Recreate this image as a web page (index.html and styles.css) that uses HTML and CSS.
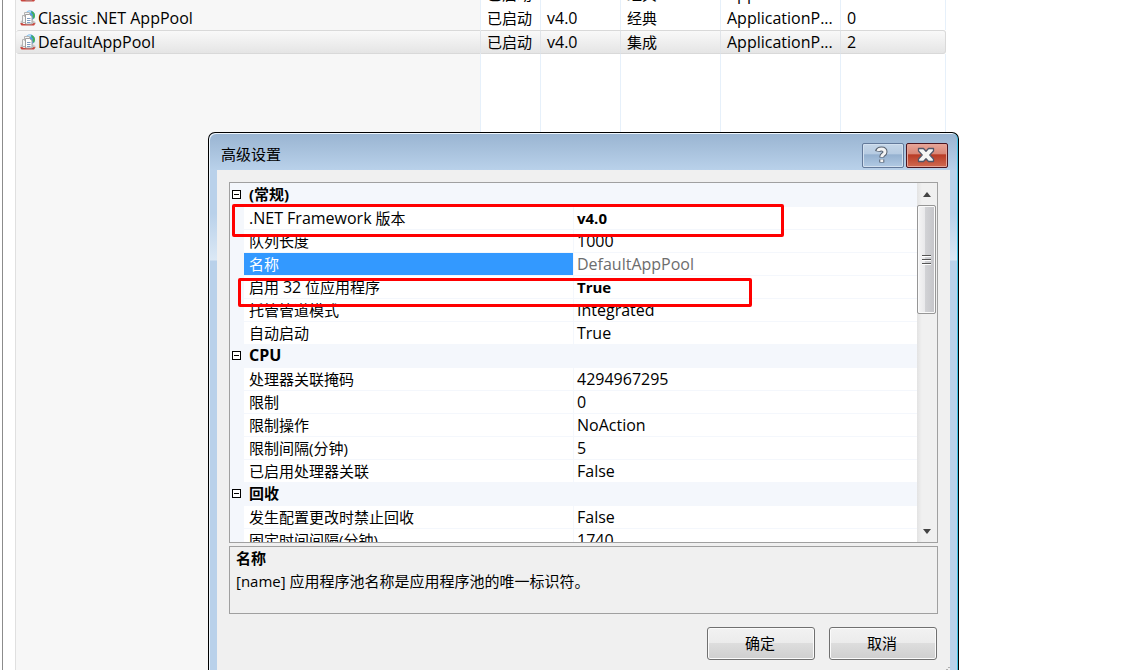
FILE: index.html
```html
<!DOCTYPE html>
<html lang="zh-CN">
<head>
<meta charset="utf-8">
<title>高级设置</title>
<link rel="stylesheet" href="styles.css">
</head>
<body>
<svg class="defs" aria-hidden="true">
  <symbol id="pool" viewBox="0 0 16 16">
    <circle cx="10" cy="5.5" r="5" fill="#4a9be4"/>
    <path d="M6 2.500Q8 .5 11 .8L10.500 3 8.500 4.500 6 4Z" fill="#b5e2fa"/>
    <path d="M11.500 1Q15 2.500 15 6L14 9 12.500 7 13 4.500 11.500 3Z" fill="#45b054"/>
    <path d="M.5 11.500 3 9.500v4l-2 1zM12 10l3.500 2v2l-3-.5z" fill="#c6c6c6"/>
    <path d="M0 13.500Q2 12.500 3.500 14h9q1-1.500 3-.5L14 15.500H1.500Z" fill="#c9473f"/>
    <path d="M2.500 5.500h5v7h-5zM4.500 2.500h5v4h-5z" fill="#f5f5f5" stroke="#b4b4b4"/>
    <path d="M5.500 4.500h4l2.500 2v7.500H5.500z" fill="#fff" stroke="#a0a0a0"/>
    <path d="M7 8.500h3.500M7 10.500h3.500M7 12.500h3.500" stroke="#7f9cc0"/>
  </symbol>
</svg>
<main class="list">
  <table class="pools">
    <colgroup><col><col class="c-state"><col class="c-ver"><col class="c-mode"><col class="c-id"><col class="c-apps"></colgroup>
    <tbody>
      <tr><td><span class="name"><svg class="ico"><use href="#pool"/></svg>ASP.NET v4.0</span></td><td>已启动</td><td>v4.0</td><td>经典</td><td>ApplicationP...</td><td>0</td></tr>
      <tr><td><span class="name"><svg class="ico"><use href="#pool"/></svg>Classic .NET AppPool</span></td><td>已启动</td><td>v4.0</td><td>经典</td><td>ApplicationP...</td><td>0</td></tr>
      <tr class="chosen"><td><span class="name"><svg class="ico"><use href="#pool"/></svg>DefaultAppPool</span></td><td>已启动</td><td>v4.0</td><td>集成</td><td>ApplicationP...</td><td>2</td></tr>
      <tr class="rest"><td></td><td></td><td></td><td></td><td></td><td></td></tr>
    </tbody>
  </table>
</main>

<section class="dialog" role="dialog" aria-labelledby="dlg-title">
  <header class="caption">
    <h1 id="dlg-title">高级设置</h1>
    <button class="cap help" type="button" aria-label="帮助">
      <svg width="14" height="18" viewBox="1 0 14 18" fill="none"><path d="M3.500 5.500Q4 3 7.500 3 11 3 11 6q0 1.500-2 2.700-1.200.8-1.200 2.800M7.800 13.500v3" stroke="#56606f" stroke-width="5"/><path d="M4 5Q4.500 3 7.500 3 11 3 11 6q0 1.500-2 2.700-1.200.8-1.200 2.300M7.800 13.500v2.500" stroke="#f4f4f4" stroke-width="3"/></svg>
    </button>
    <button class="cap close" type="button" aria-label="关闭">
      <svg width="18" height="16" viewBox="0 0 18 16"><path d="M1.500 1.500h5L9 4.200l2.500-2.700h5v2.500L12.800 8l3.700 4v2.500h-5L9 11.800l-2.500 2.700h-5V12l3.700-4-3.700-4z" fill="#f5f5f5" stroke="#525668" stroke-width="1.300" stroke-linejoin="round"/></svg>
    </button>
  </header>
  <div class="content">
    <div class="grid">
      <div class="view">
        <table class="props">
          <colgroup><col class="p-gutter"><col class="p-name"><col></colgroup>
          <tbody>
            <tr class="cat"><td><button class="fold" type="button" aria-label="折叠 常规"></button></td><th colspan="2">(常规)</th></tr>
            <tr><td></td><td><span class="latin">.NET Framework</span> 版本</td><td><b>v4.0</b></td></tr>
            <tr><td></td><td>队列长度</td><td>1000</td></tr>
            <tr class="picked"><td></td><td>名称</td><td>DefaultAppPool</td></tr>
            <tr><td></td><td>启用 <span class="latin">32</span> 位应用程序</td><td><b>True</b></td></tr>
            <tr><td></td><td>托管管道模式</td><td>Integrated</td></tr>
            <tr><td></td><td>自动启动</td><td>True</td></tr>
            <tr class="cat"><td><button class="fold" type="button" aria-label="折叠 CPU"></button></td><th colspan="2"><span class="latin">CPU</span></th></tr>
            <tr><td></td><td>处理器关联掩码</td><td>4294967295</td></tr>
            <tr><td></td><td>限制</td><td>0</td></tr>
            <tr><td></td><td>限制操作</td><td>NoAction</td></tr>
            <tr><td></td><td>限制间隔(分钟)</td><td>5</td></tr>
            <tr><td></td><td>已启用处理器关联</td><td>False</td></tr>
            <tr class="cat"><td><button class="fold" type="button" aria-label="折叠 回收"></button></td><th colspan="2">回收</th></tr>
            <tr><td></td><td>发生配置更改时禁止回收</td><td>False</td></tr>
            <tr><td></td><td>固定时间间隔(分钟)</td><td>1740</td></tr>
          </tbody>
        </table>
      </div>
      <div class="bar">
        <button class="arrow" type="button" aria-label="向上滚动"><svg width="8" height="5"><path d="M0 5 4 0l4 5z" fill="#444"/></svg></button>
        <div class="thumb"><i></i><i></i><i></i></div>
        <button class="arrow down" type="button" aria-label="向下滚动"><svg width="8" height="5"><path d="M0 0h8L4 5z" fill="#444"/></svg></button>
      </div>
    </div>
    <div class="about"><b>名称</b><p>[name] 应用程序池名称是应用程序池的唯一标识符。</p></div>
    <footer class="actions"><button class="push" type="button">确定</button><button class="push" type="button">取消</button></footer>
    <svg class="grip" width="4" height="3" aria-hidden="true"><path d="M2 0h2v1H2zM0 2h2v1H0z" fill="#b0b0b0"/></svg>
  </div>
  <div class="mark mark-version"></div>
  <div class="mark mark-bits"></div>
</section>
</body>
</html>
```
FILE: styles.css
```css
* { box-sizing: border-box; }
body {
  margin: 0;
  height: 100vh;
  overflow: hidden;
  background: #fff;
  color: #000;
  font: 15px/22px "Open Sans", "Noto Sans CJK SC", sans-serif;
}
button { font: inherit; color: inherit; padding: 0; }
table { border-collapse: separate; border-spacing: 0; table-layout: fixed; }
td, th { padding: 0; text-align: left; white-space: nowrap; overflow: hidden; }
.defs { display: none; }

/* application pool list */
.list {
  height: 100vh;
  margin-left: 2px;
  padding-left: 12px;
  border-left: 1px solid #8c8c8c;
  overflow: hidden;
}
.pools {
  width: 931px;
  height: calc(100vh + 18px);
  margin-top: -18px;
  border-left: 1px solid #e0e0e0;
}
.c-state { width: 60px; }
.c-ver { width: 80px; }
.c-mode { width: 100px; }
.c-id { width: 120px; }
.c-apps { width: 105px; }
.pools tr { height: 24px; }
.pools .rest { height: auto; }
.pools td { padding-left: 6px; border-right: 1px solid #e6f0fa; font-size: 16px; }
.pools td:nth-child(2), .pools td:nth-child(4) { font-size: 15px; }
.pools td:first-child { padding-left: 4px; background: #f7f7f7; }
.name { display: flex; align-items: center; gap: 2px; }
.ico { width: 16px; height: 16px; flex: none; }
.pools .chosen td {
  background: linear-gradient(#f9f9f9, #e5e5e5);
  border-top: 1px solid #d9d9d9;
  border-bottom: 1px solid #d9d9d9;
  border-right-color: #e0e4e9;
}
.pools .chosen td:first-child { border-radius: 3px 0 0 3px; }
.pools .chosen td:last-child { border-radius: 0 3px 3px 0; border-right-color: #d9d9d9; }

/* settings window */
.dialog {
  position: absolute;
  left: 208px;
  top: 132px;
  bottom: 0;
  width: 751px;
  display: flex;
  flex-direction: column;
  padding: 0 7px;
  border: 1px solid #000;
  border-bottom: 0;
  border-radius: 7px 7px 0 0;
  box-shadow: inset 1px 1px #eef6fd, inset -1px 0 #43c3e6;
  background: linear-gradient(#99b4d1, #b9d1ea 37px, #b9d1ea 80px, #dbe8f5 127px, #b9d1ea 128px);
}
.caption {
  flex: none;
  height: 37px;
  display: flex;
  align-items: center;
  gap: 2px;
  padding: 7px 3px 0 5px;
}
.caption h1 { flex: 1; margin: 0; padding-bottom: 2px; font-size: 15px; font-weight: 400; }
.cap {
  width: 42px;
  height: 25px;
  display: grid;
  place-items: center;
  padding-right: 2px;
  border: 1px solid #63799a;
  border-radius: 2px;
  box-shadow: inset 0 0 0 1px #d2e0ef;
  background: linear-gradient(#c5d6e8, #b5cae1 45%, #94b0cf 46%, #b1cae4);
}
.close {
  border-color: #4b1520;
  box-shadow: inset 0 0 0 1px #e6a497;
  background: linear-gradient(#e7a699, #d88474 45%, #b83a24 46%, #d06a52);
}
.content {
  position: relative;
  flex: 1;
  min-height: 0;
  display: flex;
  flex-direction: column;
  margin: 0 1px;
  padding: 12px 12px 10px;
  background: #f0f0f0;
}
.grip { position: absolute; right: 0; bottom: 0; }
.grid { flex: 1; min-height: 0; display: flex; border: 1px solid #a0a0a0; }
.view { flex: 1; overflow: hidden; padding-top: 1px; background: #f4f7fc; }
.props { width: 100%; }
.p-gutter { width: 14px; }
.p-name { width: 330px; }
.props tr { height: 23px; }
.props td, .props th { height: 23px; line-height: 22px; background: #fff; border-bottom: 1px solid #f4f7fc; }
.props td:nth-child(2) { padding-left: 5px; border-right: 1px solid #f4f7fc; }
.props td:nth-child(3) { padding-left: 3px; font-size: 16px; }
.props b { font-size: 15px; }
.latin { font-size: 16px; line-height: 20px; }
.props td:first-child, .props .cat th { background: #f4f7fc; }
.props .cat th { padding-left: 5px; font-weight: 700; line-height: 20px; vertical-align: top; }
.props .picked td:nth-child(2) { background: #39f; color: #fff; }
.props .picked td:nth-child(3) { color: #6d6d6d; }
.props .cat td { vertical-align: top; }
.fold {
  display: grid;
  place-items: center;
  width: 9px;
  height: 9px;
  margin: 6px 0 0 2px;
  border: 1px solid #000;
  background: #fff;
}
.fold::before { content: ""; width: 5px; height: 1px; background: #000; }
.bar {
  width: 20px;
  display: flex;
  flex-direction: column;
  padding-right: 1px;
  background: linear-gradient(90deg, #e3e3e3, #f0f0f0 5px, #f0f0f0);
}
.arrow { height: 22px; border: 0; background: none; display: grid; place-items: center; }
.down { margin-top: auto; }
.thumb {
  height: 109px;
  display: flex;
  flex-direction: column;
  align-items: center;
  justify-content: center;
  gap: 2px;
  border: 1px solid #969696;
  border-radius: 2px;
  box-shadow: inset 0 0 0 1px #fafafa;
  background: linear-gradient(90deg, #f5f5f5, #e9e9eb 40%, #d2d3d6 41%, #c4c4c8);
}
.thumb i { width: 9px; height: 2px; border-top: 1px solid #555; background: #fff; }
.about { flex: none; height: 68px; margin-top: 3px; padding: 0 6px; border: 1px solid #a0a0a0; line-height: 23px; }
.about b { display: block; }
.about p { margin: 0; }
.actions { flex: none; display: flex; justify-content: flex-end; gap: 14px; padding: 13px 1px 0 0; }
.push {
  width: 108px;
  height: 33px;
  padding: 0 2px 2px 0;
  border: 1px solid #707070;
  border-radius: 3px;
  box-shadow: inset 0 0 0 1px #fbfbfb;
  background: linear-gradient(#f2f2f2, #ebebeb 49%, #dddddd 50%, #cfcfcf);
}

/* callout frames drawn over the window */
.mark { position: absolute; border: 3px solid #f00; border-radius: 2px; }
.mark-version { left: 23px; top: 71px; width: 552px; height: 33px; }
.mark-bits { left: 29px; top: 145px; width: 514px; height: 29px; }
```
